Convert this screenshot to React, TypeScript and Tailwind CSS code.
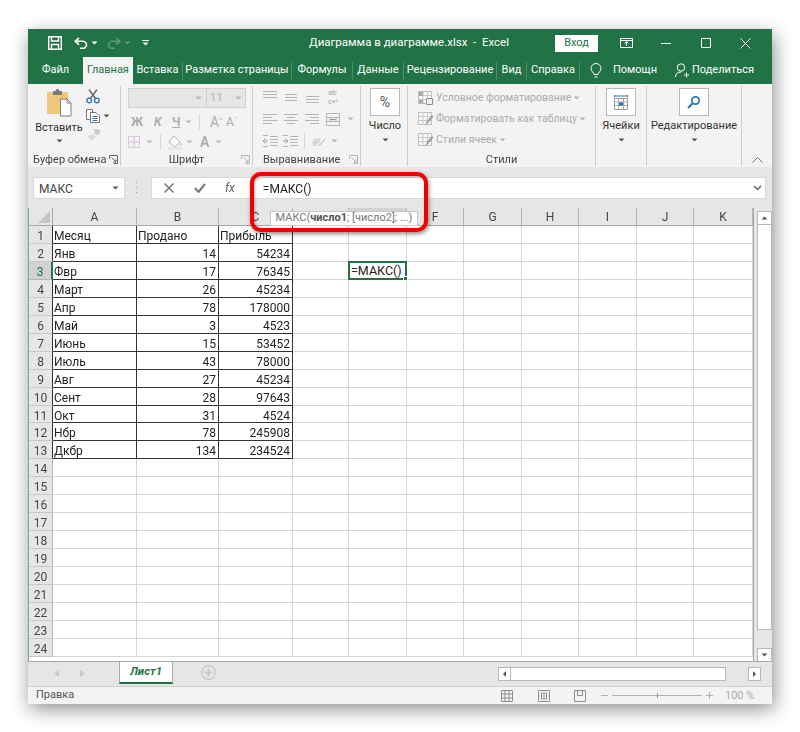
import * as React from "react";

function Caret({ dim = false, className = "" }: { dim?: boolean; className?: string }) {
  return (
    <svg width="7" height="4" viewBox="0 0 7 4" className={className}>
      <path d="M0.5 0.5h6L3.5 3.5z" fill={dim ? "#b5b5b5" : "#555"} />
    </svg>
  );
}

function Launcher({ dim = false }: { dim?: boolean }) {
  const c = dim ? "#b5b5b5" : "#666";
  return (
    <svg width="9" height="9" viewBox="0 0 9 9" fill="none" stroke={c}>
      <path d="M0.5 4V0.5H8.5V8.5H4.5M2.5 2.5L7 7M7 4.5V7H4.5" />
    </svg>
  );
}

function Lines({ aligns, w = 14 }: { aligns: number[][]; w?: number }) {
  return (
    <svg width={w} height="12" viewBox={`0 0 ${w} 12`} stroke="#b4b4b4" fill="none">
      {aligns.map(([y, a, b], i) => (
        <path key={i} d={`M${a} ${y + 0.5}H${b}`} />
      ))}
    </svg>
  );
}

function AlignTop() {
  return <Lines aligns={[[0, 0, 14], [3, 0, 14], [6, 0, 14]]} />;
}
function AlignMid() {
  return <Lines aligns={[[3, 1, 13], [6, 1, 13], [9, 1, 13]]} />;
}
function AlignBottom() {
  return <Lines aligns={[[5, 1, 14], [8, 1, 14], [11, 1, 14]]} />;
}
function TextLeft() {
  return <Lines aligns={[[1, 0, 14], [4, 0, 9], [7, 0, 14], [10, 0, 9]]} />;
}
function TextCenter() {
  return <Lines aligns={[[1, 0, 14], [4, 3, 11], [7, 0, 14], [10, 3, 11]]} />;
}
function TextRight() {
  return <Lines aligns={[[1, 0, 14], [4, 5, 14], [7, 0, 14], [10, 5, 14]]} />;
}

function Indent({ dir }: { dir: "l" | "r" }) {
  const d = dir === "l" ? "M0 6h5M2.5 3.5L0 6l2.5 2.5" : "M0 6h5M2.5 3.5L5 6l-2.5 2.5";
  return (
    <svg width="15" height="12" viewBox="0 0 15 12" fill="none" stroke="#b4b4b4">
      <path d="M7 1.5h8M7 4.5h8M7 7.5h8M7 10.5h8M0 0.5h5M0 11.5h5" />
      <path d={d} stroke="#9a9a9a" />
    </svg>
  );
}

function SaveIcon() {
  return (
    <svg width="14" height="14" viewBox="0 0 14 14" fill="none" stroke="#fff" strokeWidth="1.4">
      <path d="M0.7 0.7H13.3V13.3H0.7z" />
      <path d="M3.5 0.7V5H10.5V0.7M3.5 13.3V8.5H10.5V13.3" />
    </svg>
  );
}

function UndoIcon({ dim = false }: { dim?: boolean }) {
  return (
    <svg width="14" height="12" viewBox="0 0 14 12" fill="none" stroke={dim ? "#5d9a78" : "#fff"} strokeWidth="1.6" className={dim ? "-scale-x-100" : ""}>
      <path d="M5 0.8L1.2 4.2 5 7.6M1.5 4.2H8.5a4 3.6 0 0 1 0 7.2H6" />
    </svg>
  );
}

function PasteIcon() {
  return (
    <svg width="27" height="30" viewBox="0 0 27 30">
      <path d="M1 4h21v22H1z" fill="#eec77c" />
      <path d="M7 3h2.5a2 2 0 0 1 4 0H16v4H7z" fill="#7a7a7a" />
      <path d="M14.5 11h6.5l4 4v13H14.5z" fill="#fff" stroke="#7a7a7a" />
      <path d="M21 11v4h4" fill="none" stroke="#7a7a7a" />
    </svg>
  );
}

function CutIcon() {
  return (
    <svg width="14" height="15" viewBox="0 0 14 15" fill="none">
      <path d="M3 0.5L9.5 9.5M11 0.5L4.5 9.5" stroke="#666" strokeWidth="1.4" />
      <circle cx="3.2" cy="11.5" r="2.3" stroke="#2b6fb5" strokeWidth="1.3" />
      <circle cx="10.8" cy="11.5" r="2.3" stroke="#2b6fb5" strokeWidth="1.3" />
    </svg>
  );
}

function CopyIcon() {
  return (
    <svg width="14" height="14" viewBox="0 0 14 14" fill="none">
      <path d="M0.5 0.5H6.5V10.5H0.5z" stroke="#777" fill="#fff" />
      <path d="M4.5 3.5H10l3.5 3.5v6.5H4.5z" stroke="#777" fill="#fff" />
      <path d="M6.5 7.5h5M6.5 9.5h5M6.5 11.5h5" stroke="#2b6fb5" />
    </svg>
  );
}

function PainterIcon() {
  return (
    <svg width="15" height="13" viewBox="0 0 15 13">
      <path d="M8 1l3 0 4 2-3 4-3-1z" fill="#c9c9c9" />
      <path d="M8 6L1 8l4 5 5-4z" fill="#dcdcdc" />
    </svg>
  );
}

function BordersIcon() {
  return (
    <svg width="12" height="12" viewBox="0 0 12 12" fill="none">
      <path d="M0.5 0.5h11v11h-11z" stroke="#cfcfcf" />
      <path d="M6 0.5v11M0.5 6h11" stroke="#d8b8d8" />
    </svg>
  );
}

function FillIcon() {
  return (
    <svg width="15" height="15" viewBox="0 0 15 15" fill="none">
      <path d="M6 1L12 7 7 12 1 7z" stroke="#b5b5b5" fill="#fff" />
      <path d="M12 7c1.5 1.5 2 3 1 4-.8-1-1-2.500-1-4z" fill="#b5b5b5" />
      <path d="M0 13.500h14" stroke="#e3e3e3" strokeWidth="2" />
    </svg>
  );
}

function WrapMerge() {
  return (
    <svg width="14" height="13" viewBox="0 0 14 13" fill="none" stroke="#b4b4b4">
      <path d="M0.5 0.5h13v12h-13zM0.5 4.500h13M0.500 8.500h13M4 4.500v4M10 4.500v4" />
      <path d="M4.500 6.500h5" stroke="#8e8e8e" />
    </svg>
  );
}

function Rotate() {
  return (
    <svg width="16" height="14" viewBox="0 0 16 14" fill="none" className="overflow-visible">
      <text x="1" y="11" fontSize="8" fill="#b0b0b0" transform="rotate(-40 5 8)" fontFamily="Open Sans">ab</text>
      <path d="M9 12L15 5" stroke="#b0b0b0" />
    </svg>
  );
}

function StyleIcon({ kind }: { kind: number }) {
  return (
    <svg width="16" height="15" viewBox="0 0 16 15" fill="none">
      <path d="M0.500 0.500h13v12h-13z" stroke="#bdbdbd" fill="#f8f8f8" />
      <path d="M0.500 4.500h13M0.500 8.500h13M5 0.500v12M9.500 0.500v12" stroke="#c9c9c9" />
      {kind === 0 && <path d="M1 1h4v4H1zM1 9h4v3H1z" fill="#a8a8a8" />}
      {kind === 0 && <path d="M8.500 7.500h6v6h-6z" fill="#eee" stroke="#909090" />}
      {kind > 0 && <path d="M7 13l2-4 5-6 1.500 1.500-5 6z" fill="#9d9d9d" />}
    </svg>
  );
}

function CellsIcon() {
  return (
    <svg width="16" height="15" viewBox="0 0 16 15" fill="none">
      <path d="M1.500 3.500h13v11h-13z" stroke="#999" fill="#fff" />
      <path d="M1.500 7h13M1.500 10.500h13M5.500 3.500v11M10.500 3.500v11" stroke="#aaa" />
      <path d="M6 7.500h4v3H6z" fill="#2b6fb5" />
      <path d="M1.500 0v2M14.500 0v2M1.500 1h13" stroke="#2b6fb5" />
    </svg>
  );
}

function SearchIcon() {
  return (
    <svg width="14" height="14" viewBox="0 0 14 14" fill="none" stroke="#2b7cc0" strokeWidth="1.800">
      <circle cx="8.500" cy="5.500" r="3.700" />
      <path d="M5.500 8.500L1 13" strokeWidth="2.200" />
    </svg>
  );
}

function BigButton({ label, children, ml }: { label: string; children: React.ReactNode; ml: string }) {
  return (
    <div className={`flex flex-col items-center ${ml}`}>
      <div className="flex h-[28px] w-[30px] items-center justify-center border border-[#b8b8b8] bg-white">{children}</div>
      <div className="mt-[2px] whitespace-nowrap text-[11px] leading-[16px] text-[#333]">{label}</div>
      <Caret className="mt-[4px]" />
    </div>
  );
}

function Group({ w, label, labelClass = "justify-center", launcher, children }: { w: string; label: string; labelClass?: string; launcher?: "on" | "dim"; children: React.ReactNode }) {
  return (
    <div className={`flex h-[80px] ${w} shrink-0 flex-col border-r border-[#cdcdcd]`}>
      <div className="h-[68px]">{children}</div>
      <div className={`relative flex h-[12px] items-center ${labelClass} whitespace-nowrap text-[11px] text-[#444]`}>
        <span>{label}</span>
        {launcher && (
          <span className="absolute right-[2px] top-[1px]">
            <Launcher dim={launcher === "dim"} />
          </span>
        )}
      </div>
    </div>
  );
}

const tabs = [
  { t: "Файл", w: "w-[55px]" },
  { t: "Главная", w: "w-[50px]" },
  { t: "Вставка", w: "w-[50px]" },
  { t: "Разметка страницы", w: "w-[109px]" },
  { t: "Формулы", w: "w-[61px]" },
  { t: "Данные", w: "w-[51px]" },
  { t: "Рецензирование", w: "w-[93px]" },
  { t: "Вид", w: "w-[30px]" },
  { t: "Справка", w: "w-[53px]" },
];

const columns = ["A", "B", "C", "D", "E", "F", "G", "H", "I", "J", "K"];

const data: [string, string, string][] = [
  ["Месяц", "Продано", "Прибыль"],
  ["Янв", "14", "54234"],
  ["Фвр", "17", "76345"],
  ["Март", "26", "45234"],
  ["Апр", "78", "178000"],
  ["Май", "3", "4523"],
  ["Июнь", "15", "53452"],
  ["Июль", "43", "78000"],
  ["Авг", "27", "45234"],
  ["Сент", "28", "97643"],
  ["Окт", "31", "4524"],
  ["Нбр", "78", "245908"],
  ["Дкбр", "134", "234524"],
];

function Sheet() {
  const rows = Array.from({ length: 24 }, (_, i) => i);
  return (
    <div className="grid w-[724px] grid-cols-[24px_84px_82px_74px_56px_58px_57px_58px_57px_58px_57px_59px] grid-rows-[18px_repeat(24,17.96px)] font-['Open_Sans'] text-[12px] text-[#222]">
      <div className="flex items-end justify-end border-r border-b border-[#a8a8a8] bg-[#e6e6e6] pr-[2px] pb-[2px]">
        <svg width="12" height="12" viewBox="0 0 12 12">
          <path d="M12 0v12H0z" fill="#c4c4c4" />
        </svg>
      </div>
      {columns.map((c) => (
        <div
          key={c}
          className={`flex items-center justify-center border-r border-b border-r-[#b5b5b5] pt-px text-[12px] text-[#444] ${c === "E" ? "border-b-[#217346] bg-[#d2d2d2]" : "border-b-[#a8a8a8] bg-[#e6e6e6]"}`}
        >
          {c}
        </div>
      ))}
      {rows.map((r) => {
        const row = data[r];
        return (
          <React.Fragment key={r}>
            <div
              className={`flex items-center justify-center border-b pt-[3px] text-[12px] ${r === 2 ? "border-r-2 border-r-[#217346] border-b-[#b5b5b5] bg-[#d2d2d2] text-[#217346]" : r < 13 ? "border-r border-r-[#333] border-b-[#c8c8c8] bg-[#e6e6e6] text-[#444]" : "border-r border-r-[#b5b5b5] border-b-[#c8c8c8] bg-[#e6e6e6] text-[#444]"}`}
            >
              {r + 1}
            </div>
            {columns.map((c, ci) => {
              const inTable = r < 13 && ci < 3;
              const value = inTable ? row[ci] : "";
              const right = inTable && r > 0 && ci > 0;
              const selected = r === 2 && c === "E";
              return (
                <div
                  key={c}
                  className={`relative flex items-center overflow-visible whitespace-nowrap border-r border-b pl-px pr-[2px] pt-[3px] leading-none ${right ? "justify-end" : ""} ${inTable ? "border-[#333]" : "border-[#d6d6d6]"}`}
                >
                  {value}
                  {selected && (
                    <div className="absolute -left-px -top-px z-10 flex h-[calc(100%+2px)] w-[calc(100%+2px)] items-center border-2 border-[#217346] bg-white pl-px pt-[2px] text-[12.5px] text-[#222]">
                      =МАКС()
                      <span className="absolute -bottom-[3px] -right-[3px] h-[5px] w-[5px] border border-white bg-[#217346]" />
                    </div>
                  )}
                </div>
              );
            })}
          </React.Fragment>
        );
      })}
    </div>
  );
}

export default function App() {
  return (
    <div className="h-[732px] w-[800px] overflow-hidden bg-white pl-[28px] pt-[29px]" style={{ fontFamily: 'Roboto, "Open Sans", sans-serif' }}>
      <div className="relative flex h-[674px] w-[744px] flex-col bg-[#e6e6e6] shadow-[2px_6px_18px_rgba(0,0,0,0.45)] blur-[0.3px]">
        {/* Title bar */}
        <div className="flex h-[28px] shrink-0 items-center bg-[#217346] text-white">
          <div className="ml-[20px] flex items-center">
            <SaveIcon />
            <span className="ml-[12px]"><UndoIcon /></span>
            <span className="ml-[3px]"><Caret className="[&>path]:fill-white" /></span>
            <span className="ml-[9px]"><UndoIcon dim /></span>
            <span className="ml-[3px]"><Caret className="[&>path]:fill-[#5d9a78]" /></span>
            <span className="ml-[11px] flex flex-col items-center">
              <span className="mb-[1px] h-px w-[7px] bg-white" />
              <Caret className="[&>path]:fill-white" />
            </span>
          </div>
          <div className="ml-[160px] w-[190px] whitespace-nowrap text-[11.5px]">Диаграмма в диаграмме.xlsx&nbsp; -&nbsp; Excel</div>
          <div className="ml-[56px] flex h-[17px] w-[43px] items-center justify-center bg-white text-[11px] text-[#217346]">Вход</div>
          <div className="ml-[22px] w-[13px]">
            <svg width="13" height="10" viewBox="0 0 13 10" fill="none" stroke="#fff">
              <path d="M0.500 0.500h12v9h-12zM0.500 2.500h12M6.500 8V4M4.500 5.500l2-2 2 2" />
            </svg>
          </div>
          <div className="ml-[28px] h-px w-[10px] bg-white" />
          <div className="ml-[30px] h-[10px] w-[10px] border border-white" />
          <svg className="ml-[29px]" width="11" height="11" viewBox="0 0 11 11" stroke="#fff" fill="none">
            <path d="M0.500 0.500l10 10M10.500 0.500l-10 10" />
          </svg>
        </div>

        {/* Tabs */}
        <div className="flex h-[27px] shrink-0 items-center bg-[#217346] text-[11px] text-white">
          {tabs.map((t, i) => (
            <div key={t.t} className={`flex h-full items-center justify-center whitespace-nowrap ${t.w}`}>
              {i === 1 ? (
                <span className="flex h-full w-full items-center justify-center bg-[#f3f3f3] text-[#217346]">{t.t}</span>
              ) : (
                <span className={`flex h-[18px] w-full items-center justify-center ${i > 1 ? "border-r border-[#4a8f68]" : ""}`}>{t.t}</span>
              )}
            </div>
          ))}
          <svg className="ml-[10px]" width="12" height="16" viewBox="0 0 12 16" fill="none" stroke="#fff">
            <path d="M4 11.500c0-2-3-3-3-6a5 5 0 0 1 10 0c0 3-3 4-3 6zM4.500 14h3" />
          </svg>
          <span className="ml-[11px] w-[46px] whitespace-nowrap">Помощн</span>
          <svg className="ml-[16px]" width="14" height="15" viewBox="0 0 14 15" fill="none" stroke="#fff">
            <circle cx="6" cy="4.500" r="3.700" />
            <path d="M0.500 14c0-3 2-5 5.500-5M9 12h5M11.500 9.500v5" />
          </svg>
          <span className="ml-[3px] whitespace-nowrap">Поделиться</span>
        </div>

        {/* Ribbon */}
        <div className="flex h-[83px] shrink-0 items-start bg-[#f3f3f3] pt-[2px]">
          <Group w="w-[93px]" label="Буфер обмена" labelClass="justify-start pl-[5px]" launcher="on">
            <div className="flex">
              <div className="flex w-[58px] flex-col items-center pl-[4px] pt-[2px]">
                <span className="ml-[1px]"><PasteIcon /></span>
                <span className="mt-[2px] text-[11px] leading-[16px] text-[#333]">Вставить</span>
                <Caret className="mt-[3px]" />
              </div>
              <div className="flex flex-col gap-[5px] pt-[3px]">
                <CutIcon />
                <div className="flex items-center gap-[3px]">
                  <CopyIcon />
                  <Caret />
                </div>
                <PainterIcon />
              </div>
            </div>
          </Group>

          <Group w="w-[132px]" label="Шрифт" launcher="dim">
            <div className="pl-[7px] pt-[2px]">
              <div className="flex h-[20px] w-[118px] border border-[#d0d0d0] bg-[#e6e6e6] text-[11.5px] text-[#b0b0b0]">
                <div className="flex w-[78px] items-center justify-end border-r border-[#d0d0d0] pr-[4px]"><Caret dim /></div>
                <div className="flex flex-1 items-center justify-between px-[3px]">11<Caret dim /></div>
              </div>
              <div className="mt-[5px] flex h-[18px] items-center text-[12px] font-bold text-[#ababab]">
                <span className="w-[20px] pl-[3px]">Ж</span>
                <span className="w-[20px] pl-[6px] italic">К</span>
                <span className="w-[17px] pl-[4px] underline">Ч</span>
                <Caret dim />
                <span className="ml-[7px] h-[16px] w-px bg-[#d6d6d6]" />
                <span className="ml-[10px] font-normal text-[14px]">A<sup className="text-[7px]">^</sup></span>
                <span className="ml-[4px] font-normal text-[12px]">A<sup className="text-[7px]">ˇ</sup></span>
              </div>
              <div className="mt-[2px] flex h-[18px] items-center">
                <BordersIcon />
                <Caret dim className="ml-[6px]" />
                <span className="ml-[7px] h-[16px] w-px bg-[#d6d6d6]" />
                <span className="ml-[7px]"><FillIcon /></span>
                <Caret dim className="ml-[3px]" />
                <span className="ml-[7px] text-[14px] font-semibold text-[#ababab]">A</span>
                <Caret dim className="ml-[6px]" />
              </div>
            </div>
          </Group>

          <Group w="w-[108px]" label="Выравнивание" labelClass="justify-start pl-[10px]" launcher="dim">
            <div className="flex flex-col gap-[8px] pl-[10px] pt-[4px]">
              <div className="flex h-[14px] items-center gap-[7px]">
                <AlignTop />
                <AlignMid />
                <AlignBottom />
                <span className="ml-[2px] text-[8px] leading-[9px] text-[#a8a8a8]">ab<br />c↵</span>
              </div>
              <div className="flex h-[14px] items-center gap-[7px]">
                <TextLeft />
                <TextCenter />
                <TextRight />
                <WrapMerge />
                <Caret dim />
              </div>
              <div className="flex h-[14px] items-center gap-[5px]">
                <Indent dir="l" />
                <Indent dir="r" />
                <span className="ml-[1px] h-[16px] w-px bg-[#d6d6d6]" />
                <Rotate />
                <Caret dim />
              </div>
            </div>
          </Group>

          <Group w="w-[47px]" label="">
            <BigButton label="Число" ml="ml-[2px] pt-[2px]">
              <span className="text-[14px] text-[#555]">%</span>
            </BigButton>
          </Group>

          <Group w="w-[188px]" label="Стили">
            <div className="flex flex-col gap-[5px] pl-[10px] pt-[4px] text-[10.5px] text-[#ababab]">
              <div className="flex h-[16px] items-center gap-[2px] whitespace-nowrap"><StyleIcon kind={0} />Условное форматирование<Caret dim /></div>
              <div className="flex h-[16px] items-center gap-[2px] whitespace-nowrap"><StyleIcon kind={1} />Форматировать как таблицу<Caret dim /></div>
              <div className="flex h-[16px] items-center gap-[2px] whitespace-nowrap"><StyleIcon kind={2} />Стили ячеек<Caret dim /></div>
            </div>
          </Group>

          <Group w="w-[51px]" label="">
            <BigButton label="Ячейки" ml="pt-[2px]"><CellsIcon /></BigButton>
          </Group>

          <Group w="w-[95px]" label="">
            <BigButton label="Редактирование" ml="pt-[2px]"><SearchIcon /></BigButton>
          </Group>

          <div className="flex h-[79px] flex-1 items-end justify-center pb-[2px]">
            <svg width="11" height="6" viewBox="0 0 11 6" fill="none" stroke="#777">
              <path d="M0.500 5.500l5-5 5 5" />
            </svg>
          </div>
        </div>

        {/* Formula bar */}
        <div className="flex h-[41px] shrink-0 items-start pl-[5px] pt-[10px]">
          <div className="flex h-[22px] w-[92px] items-center justify-between border border-[#d8d8d8] bg-white pl-[5px] pr-[5px] font-['Open_Sans'] text-[12px] text-[#444]">
            <span className="pt-px">МАКС</span>
            <Caret />
          </div>
          <div className="ml-[11px] mt-[5px] flex h-[11px] flex-col justify-between">
            <span className="h-px w-px bg-[#999]" />
            <span className="h-px w-px bg-[#999]" />
            <span className="h-px w-px bg-[#999]" />
          </div>
          <div className="ml-[14px] flex h-[22px] w-[615px] items-center border border-[#d8d8d8] bg-white font-['Open_Sans'] text-[12px] text-[#222]">
            <svg className="ml-[12px]" width="10" height="10" viewBox="0 0 10 10" stroke="#777" strokeWidth="1.500" fill="none">
              <path d="M0.500 0.500l9 9M9.500 0.500l-9 9" />
            </svg>
            <svg className="ml-[20px]" width="12" height="10" viewBox="0 0 12 10" stroke="#777" strokeWidth="2" fill="none">
              <path d="M1 5l3.500 4L11 1" />
            </svg>
            <span className="ml-[19px] font-['Liberation_Serif'] text-[12px] italic text-[#666]">fx</span>
            <span className="ml-[28px] pt-px">=МАКС()</span>
            <svg className="ml-auto mr-[3px]" width="9" height="6" viewBox="0 0 9 6" fill="none" stroke="#666" strokeWidth="1.500">
              <path d="M1 1l3.500 3.500L8 1" />
            </svg>
          </div>
        </div>

        {/* Sheet + vertical scrollbar */}
        <div className="flex h-[453px] shrink-0 border-l border-l-[#6fae8a]">
          <div className="flex flex-col border-r border-[#a8a8a8] bg-white">
            <Sheet />
            <div className="flex-1" />
          </div>
          <div className="ml-[3px] mt-[3px] flex h-[451px] w-[15px] flex-col bg-[#e6e6e6]">
            <div className="flex h-[14px] items-center justify-center border border-[#b8b8b8] bg-white">
              <Caret className="rotate-180" />
            </div>
            <div className="h-[405px] border-x border-b border-[#b8b8b8] bg-white" />
            <div className="flex-1" />
            <div className="flex h-[14px] items-center justify-center border border-[#b8b8b8] bg-white">
              <Caret />
            </div>
          </div>
        </div>

        {/* Sheet tabs */}
        <div className="flex h-[25px] shrink-0 border-t border-[#a8a8a8] pl-[26px]">
          <svg className="mt-[8px]" width="5" height="7" viewBox="0 0 5 7"><path d="M5 0v7L0 3.500z" fill="#c8c8c8" /></svg>
          <svg className="ml-[21px] mt-[8px]" width="5" height="7" viewBox="0 0 5 7"><path d="M0 0v7l5-3.500z" fill="#c8c8c8" /></svg>
          <div className="-mt-px ml-[34px] flex h-[23px] w-[54px] items-center justify-center border-x border-t border-[#a8a8a8] border-b-2 border-b-[#217346] bg-white pb-px font-['Open_Sans'] text-[11.5px] font-bold italic text-[#217346]">
            Лист1
          </div>
          <svg className="ml-[28px] mt-[3px]" width="15" height="15" viewBox="0 0 15 15" fill="none" stroke="#c4c4c4" strokeWidth="1.200">
            <circle cx="7.500" cy="7.500" r="6.800" />
            <path d="M7.500 3.500v8M3.500 7.500h8" strokeWidth="1.500" />
          </svg>
          <div className="ml-[282px] mt-[5px] flex h-[14px] w-[263px]">
            <div className="flex w-[13px] items-center justify-center border border-[#b8b8b8] bg-white"><Caret className="rotate-90" /></div>
            <div className="w-[215px] border-y border-r border-[#b8b8b8] bg-white" />
            <div className="flex-1" />
            <div className="flex w-[13px] items-center justify-center border border-[#b8b8b8] bg-white"><Caret className="-rotate-90" /></div>
          </div>
        </div>

        {/* Status bar */}
        <div className="flex h-[18px] shrink-0 items-center border-t border-[#d0d0d0] bg-[#f3f3f3] pl-[8px] text-[11px] text-[#555]">
          <span className="w-[465px]">Правка</span>
          <svg width="12" height="12" viewBox="0 0 12 12" fill="none" stroke="#8c8c8c">
            <path d="M0.500 0.500h11v11h-11zM4 0.500v11M8 0.500v11M0.500 4h11M0.500 8h11" />
          </svg>
          <svg className="ml-[25px]" width="12" height="12" viewBox="0 0 12 12" fill="none" stroke="#8c8c8c">
            <path d="M0.500 0.500h11v11h-11zM3.500 3h5v6h-5zM5 5h2M5 7h2" />
          </svg>
          <svg className="ml-[24px]" width="12" height="12" viewBox="0 0 12 12" fill="none" stroke="#8c8c8c">
            <path d="M0.500 0.500h11v11h-11zM3.500 0.500v5h5v-5" />
          </svg>
          <span className="ml-[15px] h-px w-[7px] bg-[#b0b0b0]" />
          <div className="relative ml-[4px] h-px w-[90px] bg-[#b0b0b0]">
            <span className="absolute left-[45px] -top-[2px] h-[5px] w-px bg-[#999]" />
          </div>
          <svg className="ml-[4px]" width="7" height="7" viewBox="0 0 7 7" stroke="#b0b0b0"><path d="M0 3.500h7M3.500 0v7" /></svg>
          <span className="ml-[12px] whitespace-nowrap pt-px text-[#ababab]">100 %</span>
        </div>

        {/* Function hint, over the headers */}
        <div className="absolute left-[242px] top-[182px] z-20 flex h-[15px] w-[148px] items-center justify-center whitespace-nowrap border border-[#c8c8c8] bg-white font-['Open_Sans'] text-[11px] text-[#777]">
          МАКС(<b className="text-[#555]">число1</b>; [число2]; ...)
        </div>
        {/* Red annotation frame */}
        <div className="absolute left-[222px] top-[143px] z-30 h-[60px] w-[178px] rounded-[11px] border-4 border-[#f00000] shadow-[1px_2px_4px_rgba(0,0,0,0.45),inset_1px_1px_3px_rgba(0,0,0,0.25)]" />
      </div>
    </div>
  );
}
